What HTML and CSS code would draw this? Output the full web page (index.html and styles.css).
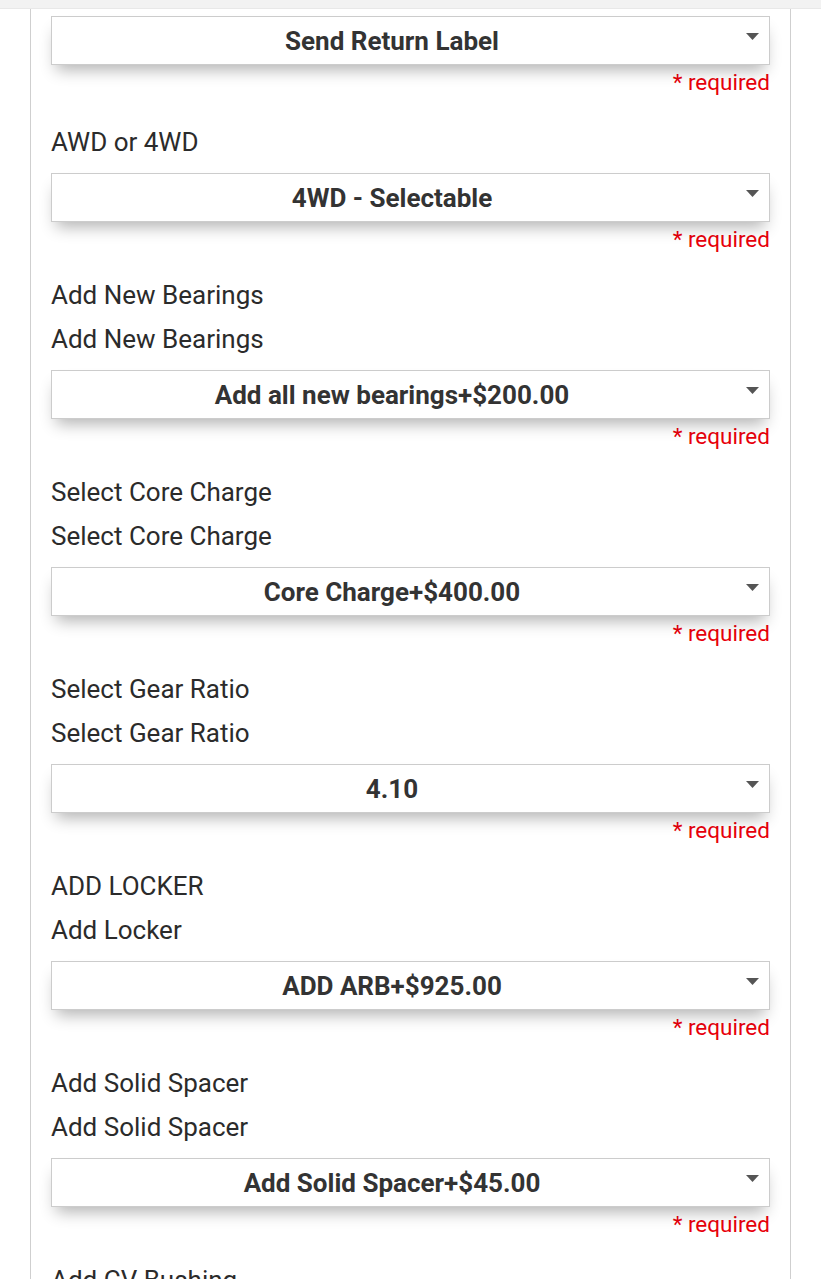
FILE: index.html
```html
<!DOCTYPE html>
<html lang="en">

<head>
    <meta charset="UTF-8">
    <meta name="viewport" content="width=device-width, initial-scale=1.0">
    <title>Product Options</title>
    <link rel="stylesheet" href="styles.css">
</head>

<body>

    <div class="top-strip"></div>

    <div class="panel">
        <div class="field field-first">
            <div class="select">
                <span class="select-value">Send Return Label</span>
                <svg class="arrow" width="13" height="7" viewBox="0 0 13 7"><path d="M0 0h13L6.5 7z" /></svg>
            </div>
            <div class="required">* required</div>
        </div>

        <div class="field">
            <div class="label">AWD or 4WD</div>
            <div class="select">
                <span class="select-value">4WD - Selectable</span>
                <svg class="arrow" width="13" height="7" viewBox="0 0 13 7"><path d="M0 0h13L6.5 7z" /></svg>
            </div>
            <div class="required">* required</div>
        </div>

        <div class="field">
            <div class="label">Add New Bearings</div>
            <div class="label">Add New Bearings</div>
            <div class="select">
                <span class="select-value">Add all new bearings+$200.00</span>
                <svg class="arrow" width="13" height="7" viewBox="0 0 13 7"><path d="M0 0h13L6.5 7z" /></svg>
            </div>
            <div class="required">* required</div>
        </div>

        <div class="field">
            <div class="label">Select Core Charge</div>
            <div class="label">Select Core Charge</div>
            <div class="select">
                <span class="select-value">Core Charge+$400.00</span>
                <svg class="arrow" width="13" height="7" viewBox="0 0 13 7"><path d="M0 0h13L6.5 7z" /></svg>
            </div>
            <div class="required">* required</div>
        </div>

        <div class="field">
            <div class="label">Select Gear Ratio</div>
            <div class="label">Select Gear Ratio</div>
            <div class="select">
                <span class="select-value">4.10</span>
                <svg class="arrow" width="13" height="7" viewBox="0 0 13 7"><path d="M0 0h13L6.5 7z" /></svg>
            </div>
            <div class="required">* required</div>
        </div>

        <div class="field">
            <div class="label">ADD LOCKER</div>
            <div class="label">Add Locker</div>
            <div class="select">
                <span class="select-value">ADD ARB+$925.00</span>
                <svg class="arrow" width="13" height="7" viewBox="0 0 13 7"><path d="M0 0h13L6.5 7z" /></svg>
            </div>
            <div class="required">* required</div>
        </div>

        <div class="field">
            <div class="label">Add Solid Spacer</div>
            <div class="label">Add Solid Spacer</div>
            <div class="select">
                <span class="select-value">Add Solid Spacer+$45.00</span>
                <svg class="arrow" width="13" height="7" viewBox="0 0 13 7"><path d="M0 0h13L6.5 7z" /></svg>
            </div>
            <div class="required">* required</div>
        </div>

        <div class="field">
            <div class="label">Add CV Bushing</div>
            <div class="label">Add CV Bushing</div>
        </div>
    </div>

</body>

</html>
```

FILE: styles.css
```css
body {
    font-family: Roboto, "Noto Sans", Arial, sans-serif;
    background-color: #ffffff;
    color: #2f2f2f;
    margin: 0;
    height: 1279px;
    overflow: hidden;
}

.top-strip {
    height: 8px;
    background-color: #f2f2f2;
    border-bottom: 1px solid #e8e8e8;
}

.panel {
    margin-left: 30px;
    width: 719px;
    padding: 7px 20px 0 20px;
    border-left: 1px solid #cfcfcf;
    border-right: 1px solid #cfcfcf;
    min-height: 1400px;
}

.field {
    margin-bottom: 19px;
}

.field-first {
    margin-bottom: 23px;
}

.label {
    font-size: 26px;
    line-height: 44px;
    color: #2b2b2b;
}

.select {
    position: relative;
    height: 49px;
    box-sizing: border-box;
    margin-top: 9px;
    padding: 0 40px 0 3px;
    display: flex;
    align-items: center;
    justify-content: center;
    background-color: #fff;
    border: 1px solid #cccccc;
    box-shadow: 0 10px 16px -5px rgba(0, 0, 0, 0.3);
}

.field-first .select {
    margin-top: 0;
}

.select-value {
    font-size: 26px;
    font-weight: bold;
    color: #333;
}

.arrow {
    position: absolute;
    right: 10px;
    top: 16px;
    fill: #555;
}

.required {
    margin-top: 2px;
    text-align: right;
    font-size: 22.5px;
    line-height: 30px;
    color: #e8000b;
}
```
